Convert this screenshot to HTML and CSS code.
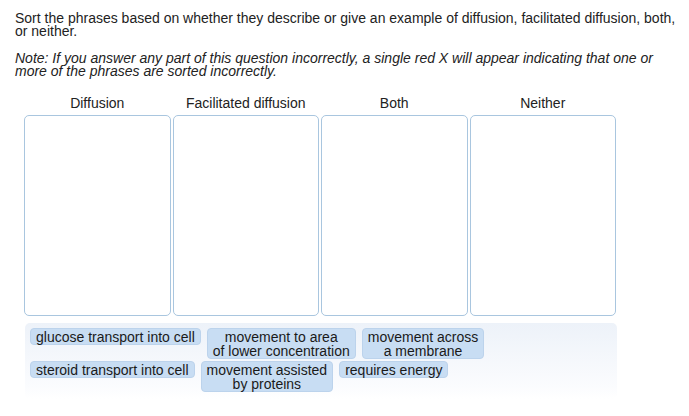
FILE: index.html
```
<!DOCTYPE html>
<html lang="en">
<head>
  <meta charset="UTF-8" />
  <title>Sort the phrases</title>
  <link rel="stylesheet" href="styles.css">
</head>
<body>

  <!-- Question text -->
  <p class="prompt">Sort the phrases based on whether they describe or give an example of diffusion, facilitated diffusion, both, or neither.</p>
  <p class="note">Note: If you answer any part of this question incorrectly, a single red X will appear indicating that one or more of the phrases are sorted incorrectly.</p>

  <!-- Drop targets -->
  <div class="board">
    <div class="column">
      <div class="column-title">Diffusion</div>
      <div class="drop-box"></div>
    </div>
    <div class="column">
      <div class="column-title">Facilitated diffusion</div>
      <div class="drop-box"></div>
    </div>
    <div class="column">
      <div class="column-title">Both</div>
      <div class="drop-box"></div>
    </div>
    <div class="column">
      <div class="column-title">Neither</div>
      <div class="drop-box"></div>
    </div>
  </div>

  <!-- Phrase pool -->
  <div class="pool">
    <div class="chip">glucose transport into cell</div>
    <div class="chip">movement to area
of lower concentration</div>
    <div class="chip">movement across
a membrane</div>
    <div class="chip">steroid transport into cell</div>
    <div class="chip">movement assisted
by proteins</div>
    <div class="chip">requires energy</div>
  </div>

</body>
</html>
```

FILE: styles.css
```
body {
  margin: 0;
  padding: 12px 6px 12px 15px;
  font-family: "Liberation Sans", Arial, sans-serif;
  font-size: 14px;
  line-height: 13px;
  color: #222;
  background: #fff;
}

p {
  margin: 0;
}

.prompt {
  width: 668px;
  margin-bottom: 14px;
}

.note {
  width: 660px;
  font-style: italic;
  margin-bottom: 19px;
}

/* Category columns */
.board {
  display: flex;
  gap: 2px;
  margin-left: 9px;
  width: 592px;
}

.column {
  flex: 1;
}

.column-title {
  text-align: center;
  margin-bottom: 5px;
}

.drop-box {
  height: 199px;
  border: 1px solid #a9c6df;
  border-radius: 5px;
  background: #fff;
}

/* Unsorted phrases */
.pool {
  margin: 7px 0 0 10px;
  width: 582px;
  height: 66px;
  padding: 5px;
  border-radius: 5px;
  background: linear-gradient(to bottom, #edf2f9, #fbfcfe 85%, #fff);
  display: flex;
  flex-wrap: wrap;
  align-items: flex-start;
  align-content: flex-start;
  column-gap: 6px;
  row-gap: 2px;
}

/* two-line phrases keep their own line break */
.chip {
  padding: 0.5px 5px;
  border: 1px solid #bcd3ec;
  border-radius: 4px;
  background: #c8ddf3;
  color: #1a1a1a;
  line-height: 14px;
  text-align: center;
  white-space: pre-line;
}
```
